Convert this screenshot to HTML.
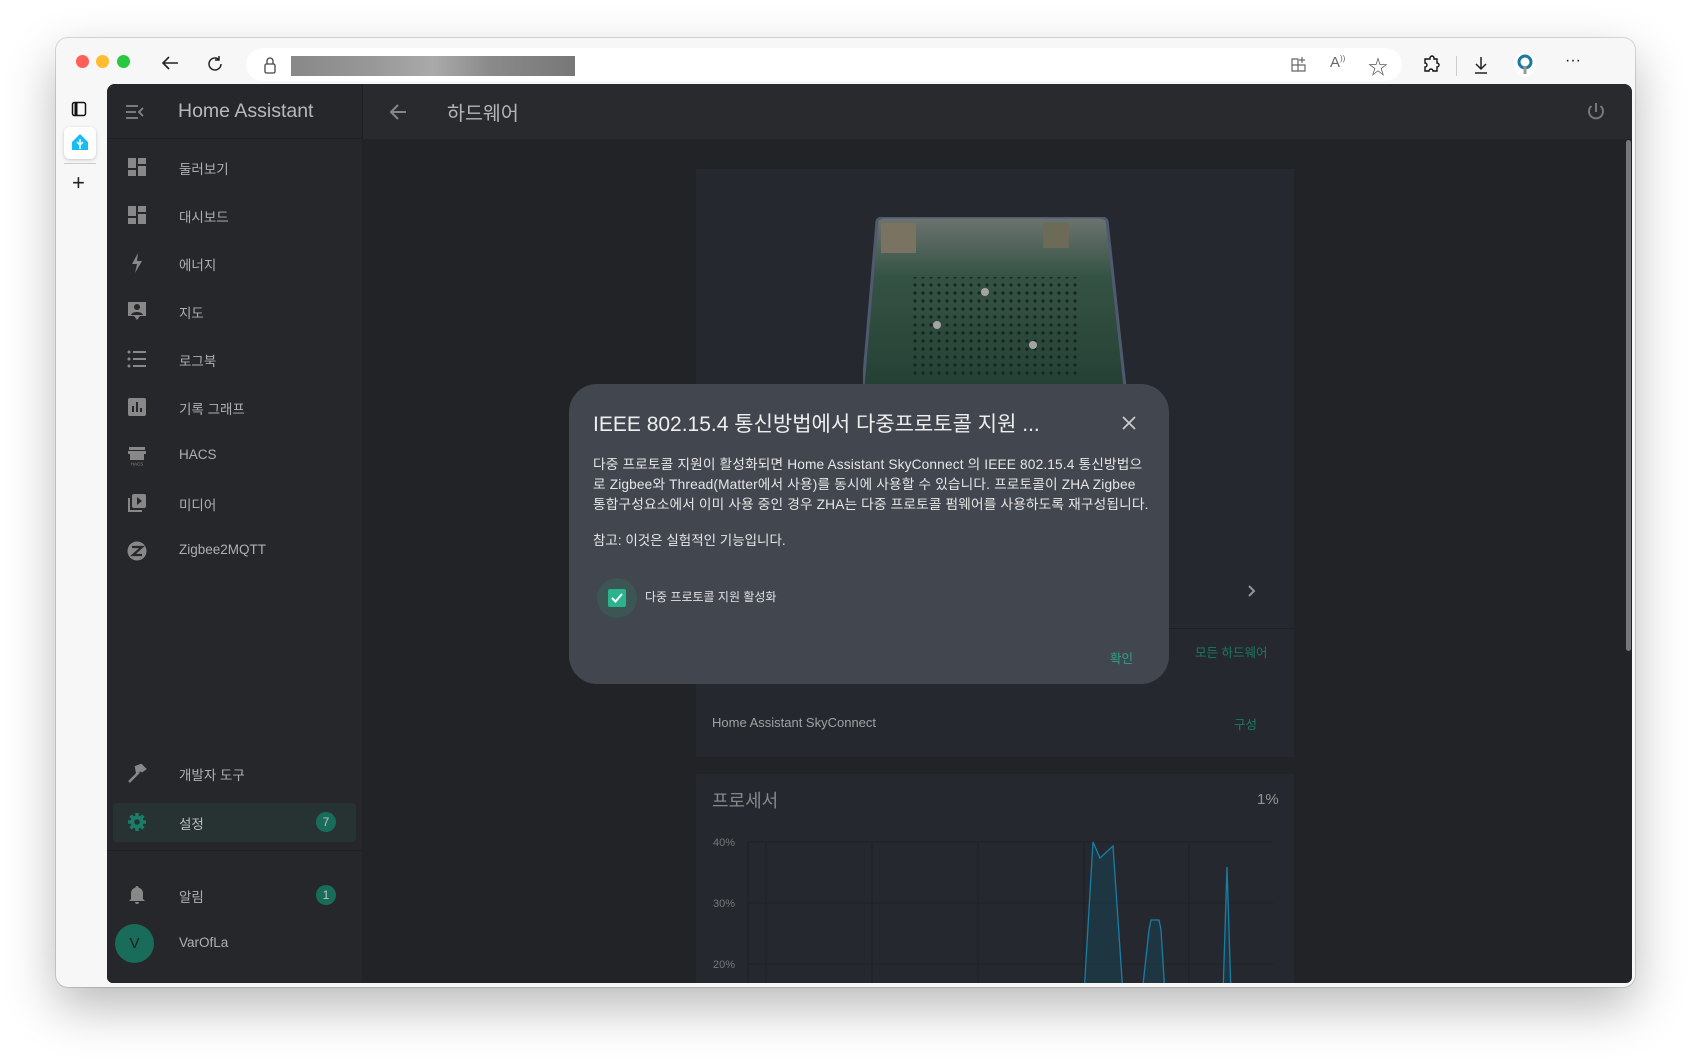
<!DOCTYPE html>
<html><head><meta charset="utf-8"><style>
*{margin:0;padding:0;box-sizing:border-box}
body{width:1691px;height:1061px;background:#fff;position:relative;overflow:hidden;font-family:"Liberation Sans","Noto Sans CJK KR",sans-serif}
.abs{position:absolute}
.win{left:56px;top:38px;width:1579px;height:949px;border-radius:12px;background:#f7f7f7;box-shadow:0 20px 50px rgba(0,0,0,.28),0 0 0 1px #ddd}
.app{left:107px;top:84px;width:1525px;height:899px;background:#26282c;border-radius:8px 8px 6px 6px;overflow:hidden}
.side{left:0;top:0;width:255px;height:899px;background:#2b2d31}
.hdr{left:255px;top:0;width:1270px;height:55px;background:#2e3035}
.sidehdr{left:0;top:0;width:255px;height:55px;background:#2b2d31;border-bottom:1px solid #232427}
.it{position:absolute;left:0;width:255px;height:40px;color:#c8c8c8;font-size:13.5px}
.it .ic{position:absolute;left:20px;top:10px;width:20px;height:20px}
.it .tx{position:absolute;left:72px;top:11px}
.card{background:#2b2f36;position:absolute}
</style></head><body>
<div class="abs win"></div>
<div class="abs" style="left:76px;top:55px;width:13px;height:13px;border-radius:50%;background:#fe5f57"></div>
<div class="abs" style="left:96px;top:55px;width:13px;height:13px;border-radius:50%;background:#febc2e"></div>
<div class="abs" style="left:117px;top:55px;width:13px;height:13px;border-radius:50%;background:#28c840"></div>
<svg class="abs" style="left:160px;top:55px" width="20" height="16" viewBox="0 0 20 16"><path d="M18 8H3M9 2L3 8l6 6" stroke="#222" stroke-width="1.6" fill="none"/></svg>
<svg class="abs" style="left:206px;top:55px" width="18" height="18" viewBox="0 0 18 18"><path d="M15 9a6 6 0 1 1-2-4.5M13 1v4h-4" stroke="#222" stroke-width="1.5" fill="none"/></svg>
<div class="abs" style="left:246px;top:48px;width:1156px;height:33px;border-radius:17px;background:#fff"></div>
<svg class="abs" style="left:263px;top:56px" width="14" height="18" viewBox="0 0 14 18"><rect x="2" y="8" width="10" height="9" rx="1.5" stroke="#444" stroke-width="1.3" fill="none"/><path d="M4 8V5a3 3 0 0 1 6 0v3" stroke="#444" stroke-width="1.3" fill="none"/></svg>
<div class="abs" style="left:291px;top:56px;width:284px;height:20px;background:linear-gradient(90deg,#888,#999 30%,#aaa 50%,#8a8a8a 70%,#777)"></div>
<svg class="abs" style="left:1290px;top:56px" width="18" height="18" viewBox="0 0 18 18"><path d="M2 3h6v12H2zM2 9h13v6H8M12 1v6M9 4h6" stroke="#666" stroke-width="1.2" fill="none"/></svg>
<div class="abs" style="left:1330px;top:54px;font-size:15px;color:#666">A<sup style="font-size:8px">))</sup></div>
<div class="abs" style="left:1368px;top:51px;font-size:20px;color:#555">☆</div>
<svg class="abs" style="left:1422px;top:55px" width="20" height="20" viewBox="0 0 20 20"><path d="M8 3a2 2 0 0 1 4 0v1h3v4a2 2 0 0 1 0 4v4h-4a2 2 0 0 0-4 0H3v-4a2 2 0 0 0 0-4V4h5z" stroke="#111" stroke-width="1.4" fill="none"/></svg>
<div class="abs" style="left:1456px;top:56px;width:1px;height:20px;background:#ccc"></div>
<svg class="abs" style="left:1472px;top:55px" width="18" height="20" viewBox="0 0 18 20"><path d="M9 2v12M4 9l5 5 5-5M3 18h12" stroke="#222" stroke-width="1.5" fill="none"/></svg>
<div class="abs" style="left:1514px;top:53px;width:22px;height:24px;border-radius:50%;background:#fff"></div>
<svg class="abs" style="left:1516px;top:54px" width="18" height="22" viewBox="0 0 18 22"><circle cx="9" cy="8" r="6" stroke="#1b7aa0" stroke-width="3" fill="none"/><path d="M9 12v8" stroke="#999" stroke-width="3"/></svg>
<div class="abs" style="left:1565px;top:52px;font-size:16px;color:#222">···</div>
<svg class="abs" style="left:71px;top:101px" width="16" height="16" viewBox="0 0 16 16"><rect x="1.5" y="1.5" width="13" height="13" rx="2" stroke="#111" stroke-width="1.5" fill="none"/><path d="M5 2v12" stroke="#111" stroke-width="3"/></svg>
<div class="abs" style="left:64px;top:127px;width:32px;height:32px;border-radius:6px;background:#fff;box-shadow:0 1px 3px rgba(0,0,0,.2)"></div>
<svg class="abs" style="left:71px;top:133px" width="18" height="18" viewBox="0 0 18 18"><path d="M9 1L1 9v8h16V9z" fill="#18bcf2"/><path d="M9 6v10M6 9l3 3 3-3" stroke="#fff" stroke-width="1.5" fill="none"/></svg>
<div class="abs" style="left:64px;top:163px;width:32px;height:1px;background:#ccc"></div>
<div class="abs" style="left:72px;top:172px;font-size:22px;color:#222;line-height:22px">+</div>

<div class="abs app">
 <div class="abs side"></div>
 <div class="abs sidehdr"></div>
 <div class="abs hdr"></div>
 <div class="abs" style="left:255px;top:0;width:1px;height:55px;background:#242528"></div>
 <svg class="abs" style="left:18px;top:20px" width="20" height="16" viewBox="0 0 20 16"><path d="M1 2h12M1 8h10M1 14h12M18 4l-4 4 4 4" stroke="#999" stroke-width="1.8" fill="none"/></svg>
 <div class="abs" style="left:71px;top:16px;font-size:19.5px;color:#d2d2d2">Home Assistant</div>
 <svg class="abs" style="left:282px;top:19px" width="18" height="18" viewBox="0 0 18 18"><path d="M17 9H3M9 2L2 9l7 7" stroke="#999" stroke-width="2" fill="none"/></svg>
 <div class="abs" style="left:340px;top:13px;font-size:19.5px;color:#cfcfcf">하드웨어</div>
 <svg class="abs" style="left:1478px;top:17px" width="22" height="22" viewBox="0 0 22 22"><path d="M11 2v9M6.5 5a7 7 0 1 0 9 0" stroke="#888" stroke-width="2" fill="none"/></svg>
 <div class="it" style="top:63px"><svg class="ic" viewBox="0 0 20 20"><path d="M1 1h8v10H1zM11 1h8v6h-8zM11 9h8v10h-8zM1 13h8v6H1z" fill="#9b9b9b"/></svg><span class="tx">둘러보기</span></div>
 <div class="it" style="top:111px"><svg class="ic" viewBox="0 0 20 20"><path d="M1 1h8v10H1zM11 1h8v6h-8zM11 9h8v10h-8zM1 13h8v6H1z" fill="#9b9b9b"/></svg><span class="tx">대시보드</span></div>
 <div class="it" style="top:159px"><svg class="ic" viewBox="0 0 20 20"><path d="M11 0L5 11h5l-2 9 7-12h-5z" fill="#9b9b9b"/></svg><span class="tx">에너지</span></div>
 <div class="it" style="top:207px"><svg class="ic" viewBox="0 0 20 20"><path d="M1 1h18v14h-6l-3 4-3-4H1z" fill="#9b9b9b"/><circle cx="10" cy="6" r="3" fill="#2b2d31"/><path d="M4 14c1-4 11-4 12 0z" fill="#2b2d31"/></svg><span class="tx">지도</span></div>
 <div class="it" style="top:255px"><svg class="ic" viewBox="0 0 20 20"><path d="M6 3h13M6 10h13M6 17h13" stroke="#9b9b9b" stroke-width="2"/><circle cx="2" cy="3" r="1.5" fill="#9b9b9b"/><circle cx="2" cy="10" r="1.5" fill="#9b9b9b"/><circle cx="2" cy="17" r="1.5" fill="#9b9b9b"/></svg><span class="tx">로그북</span></div>
 <div class="it" style="top:303px"><svg class="ic" viewBox="0 0 20 20"><rect x="1" y="1" width="18" height="18" rx="2" fill="#9b9b9b"/><path d="M6 15V9M10 15V5M14 15v-4" stroke="#2b2d31" stroke-width="2"/></svg><span class="tx">기록 그래프</span></div>
 <div class="it" style="top:352px"><svg class="ic" viewBox="0 0 20 20"><path d="M2 1h16v3H2zM1 5h18v3H1zM3 8h14v6H3z" fill="#9b9b9b"/><text x="10" y="19.5" font-size="4.5" fill="#9b9b9b" text-anchor="middle" font-family="Liberation Sans">HACS</text></svg><span class="tx">HACS</span></div>
 <div class="it" style="top:399px"><svg class="ic" viewBox="0 0 20 20"><rect x="5" y="1" width="14" height="14" rx="2" fill="#9b9b9b"/><path d="M10 4v8l5-4z" fill="#2b2d31"/><path d="M2 5v13h13" stroke="#9b9b9b" stroke-width="2" fill="none"/></svg><span class="tx">미디어</span></div>
 <div class="it" style="top:447px"><svg class="ic" viewBox="0 0 20 20"><circle cx="10" cy="10" r="9.5" fill="#9b9b9b"/><path d="M5 6h10L6 14h9" stroke="#2b2d31" stroke-width="2.2" fill="none"/></svg><span class="tx">Zigbee2MQTT</span></div>
 <div class="it" style="top:669px"><svg class="ic" viewBox="0 0 20 20"><path d="M2 19l10-10M9 4l5-2 4 4-3 2-2-1-3 2z" stroke="#9b9b9b" stroke-width="2.4" fill="#9b9b9b"/></svg><span class="tx">개발자 도구</span></div>
 <div class="abs" style="left:6px;top:719px;width:243px;height:39px;border-radius:4px;background:#2c3b3a"></div>
 <div class="it" style="top:718px;color:#d8d8d8"><svg class="ic" viewBox="0 0 20 20"><circle cx="10" cy="10" r="6.5" fill="#1f8f76"/><path d="M10 1v18M1 10h18M3.6 3.6l12.8 12.8M16.4 3.6L3.6 16.4" stroke="#1f8f76" stroke-width="3.5"/><circle cx="10" cy="10" r="2.8" fill="#2c3b3a"/></svg><span class="tx">설정</span></div>
 <div class="abs" style="left:209px;top:728px;width:20px;height:20px;border-radius:50%;background:#1d7c66;color:#ddd;font-size:12px;text-align:center;line-height:20px">7</div>
 <div class="abs" style="left:0;top:766px;width:255px;height:1px;background:#232427"></div>
 <div class="it" style="top:791px"><svg class="ic" viewBox="0 0 20 20"><path d="M10 1a1.5 1.5 0 0 1 1.5 1.5A6 6 0 0 1 16 9v5l2 2H2l2-2V9a6 6 0 0 1 4.5-6.5A1.5 1.5 0 0 1 10 1zM8 17h4a2 2 0 0 1-4 0z" fill="#9b9b9b"/></svg><span class="tx">알림</span></div>
 <div class="abs" style="left:209px;top:801px;width:20px;height:20px;border-radius:50%;background:#1d7c66;color:#ddd;font-size:12px;text-align:center;line-height:20px">1</div>
 <div class="abs" style="left:8px;top:840px;width:39px;height:39px;border-radius:50%;background:#1d7c66;color:#222;font-size:15px;text-align:center;line-height:39px">V</div>
 <div class="abs" style="left:72px;top:851px;color:#c8c8c8;font-size:13.5px">VarOfLa</div>

 <div class="card" style="left:589px;top:85px;width:598px;height:588px"></div>
 <svg class="abs" style="left:756px;top:133px" width="280" height="170" viewBox="0 0 280 170">
  <defs><linearGradient id="g" x1="0" y1="0" x2="0" y2="1"><stop offset="0" stop-color="#7d8480"/><stop offset=".35" stop-color="#3d5f4f"/><stop offset="1" stop-color="#2a4a3c"/></linearGradient>
  <pattern id="dots" width="8" height="8" patternUnits="userSpaceOnUse"><circle cx="4" cy="4" r="1.6" fill="#14201b"/></pattern></defs>
  <path d="M14 4Q16 0 24 0H234Q242 0 244 4L262 170H0z" fill="url(#g)" stroke="#5a6780" stroke-width="3"/>
  <rect x="18" y="6" width="35" height="30" fill="#8b8370"/><rect x="180" y="6" width="26" height="25" fill="#7c7a63"/>
  <rect x="50" y="60" width="165" height="100" fill="url(#dots)" opacity=".8"/>
  <circle cx="122" cy="75" r="4" fill="#bbb"/><circle cx="74" cy="108" r="4" fill="#bbb"/><circle cx="170" cy="128" r="4" fill="#bbb"/>
 </svg>
 <svg class="abs" style="left:1140px;top:500px" width="10" height="14" viewBox="0 0 10 14"><path d="M2 2l5 5-5 5" stroke="#aaa" stroke-width="2" fill="none"/></svg>
 <div class="abs" style="left:589px;top:544px;width:598px;height:1px;background:#222428"></div>
 <div class="abs" style="left:1088px;top:558px;color:#1d8a70;font-size:12.5px">모든 하드웨어</div>
 <div class="card" style="left:589px;top:608px;width:598px;height:64px"></div>
 <div class="abs" style="left:605px;top:631px;color:#b8b8b8;font-size:13px">Home Assistant SkyConnect</div>
 <div class="abs" style="left:1127px;top:630px;color:#1d8a70;font-size:12.5px">구성</div>
 <div class="card" style="left:589px;top:690px;width:598px;height:220px"></div>
 <div class="abs" style="left:605px;top:703px;color:#9a9a9a;font-size:18px">프로세서</div>
 <div class="abs" style="left:1150px;top:707px;color:#a8a8a8;font-size:15px">1%</div>
 <svg class="abs" style="left:589px;top:740px" width="598" height="170" viewBox="0 0 598 170">
  <g stroke="#22252a" stroke-width="1"><path d="M52 18H577M52 79H577M52 140H577M52 18V170M70 18V170M176 18V170M282 18V170M388 18V170M493 18V170"/></g>
  <g font-size="11" fill="#888" font-family="Liberation Sans"><text x="17" y="22">40%</text><text x="17" y="83">30%</text><text x="17" y="144">20%</text></g>
  <path d="M388 170L397 18L404 34L417 22L427 170zM446 170L453 106L455 96H463L465 106L469 170zM527 170L531 43L535 170z" fill="#1b4a5c" fill-opacity=".6" stroke="#1e8fbd" stroke-width="1.3"/>
 </svg>
 <div class="abs" style="left:1519px;top:56px;width:5px;height:511px;background:#888;border-radius:3px"></div>
 <div class="abs" style="left:0;top:0;width:1525px;height:899px;background:rgba(0,0,0,.12)"></div>
</div>

<div class="abs" style="left:569px;top:384px;width:600px;height:300px;border-radius:28px;background:#42464f"></div>
<div class="abs" style="left:593px;top:408px;font-size:21px;color:#eee;white-space:nowrap">IEEE 802.15.4 통신방법에서 다중프로토콜 지원 ...</div>
<svg class="abs" style="left:1121px;top:415px" width="16" height="16" viewBox="0 0 16 16"><path d="M2 2l12 12M14 2L2 14" stroke="#ccc" stroke-width="1.8"/></svg>
<div class="abs" style="left:593px;top:455px;font-size:13.7px;letter-spacing:.15px;line-height:20px;color:#e6e6e6;white-space:nowrap">다중 프로토콜 지원이 활성화되면 Home Assistant SkyConnect 의 IEEE 802.15.4 통신방법으<br>로 Zigbee와 Thread(Matter에서 사용)를 동시에 사용할 수 있습니다. 프로토콜이 ZHA Zigbee<br>통합구성요소에서 이미 사용 중인 경우 ZHA는 다중 프로토콜 펌웨어를 사용하도록 재구성됩니다.</div>
<div class="abs" style="left:593px;top:529px;font-size:13.5px;color:#e6e6e6">참고: 이것은 실험적인 기능입니다.</div>
<div class="abs" style="left:597px;top:578px;width:40px;height:40px;border-radius:50%;background:#3b5653"></div>
<div class="abs" style="left:608px;top:589px;width:18px;height:18px;border-radius:2px;background:#2bb28f"></div>
<svg class="abs" style="left:608px;top:589px" width="18" height="18" viewBox="0 0 18 18"><path d="M4 9l3.5 3.5L14 5" stroke="#fff" stroke-width="2" fill="none"/></svg>
<div class="abs" style="left:645px;top:588px;font-size:12px;color:#e0e0e0">다중 프로토콜 지원 활성화</div>
<div class="abs" style="left:1110px;top:648px;font-size:12.5px;color:#2aa488">확인</div>
</body></html>
